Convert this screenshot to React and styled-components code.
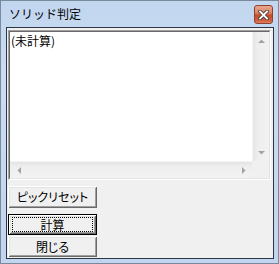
import React from 'react';
import styled, { createGlobalStyle } from 'styled-components';

const Global = createGlobalStyle`
  html, body { margin: 0; padding: 0; width: 279px; height: 264px; overflow: hidden; background: #fff; }
  #root { width: 279px; height: 264px; }
`;

const uiFont = `"Noto Sans CJK JP", "Noto Sans", sans-serif`;

const Window = styled.div`
  box-sizing: border-box;
  width: 279px;
  height: 264px;
  border: 1px solid #7a8a9c;
  background: linear-gradient(to bottom, #c2d6ef 0%, #c9dcf2 30%, #c1d5ee 100%);
  display: flex;
  flex-direction: column;
  padding: 0 4px 4px 5px;
  font-family: ${uiFont};
`;

const TitleBar = styled.div`
  height: 26px;
  flex: none;
  display: flex;
  align-items: center;
  justify-content: space-between;
  padding-left: 3px;
`;

const Title = styled.span`
  font-size: 12px;
  line-height: 14px;
  color: #000;
  margin-top: -1px;
`;

const CloseBtn = styled.div`
  box-sizing: border-box;
  width: 19px;
  height: 19px;
  margin: 4px 1px 0 0;
  align-self: flex-start;
  border: 1px solid #8e4330;
  border-radius: 3px;
  background: linear-gradient(to bottom, #e8a690 0%, #dc8466 40%, #c54a2c 55%, #d0603f 85%, #dc8060 100%);
  display: flex;
  align-items: center;
  justify-content: center;
`;

const Client = styled.div`
  flex: 1;
  border: 1px solid #2c3644;
  background: #f0f0f0;
  display: flex;
  flex-direction: column;
  align-items: flex-start;
  padding: 2px 1px 1px 1px;
`;

const TextOuter = styled.div`
  box-sizing: border-box;
  width: 263px;
  height: 150px;
  flex: none;
  border: 1px solid;
  border-color: #a0a0a0 #ffffff #ffffff #a0a0a0;
`;

const TextInner = styled.div`
  box-sizing: border-box;
  width: 100%;
  height: 100%;
  border: 1px solid;
  border-color: #696969 #e3e3e3 #e3e3e3 #696969;
  display: grid;
  grid-template-columns: 1fr 17px;
  grid-template-rows: 1fr 17px;
  background: #fff;
`;

const Content = styled.div`
  padding: 2px 1px;
  font-size: 12px;
  line-height: 14px;
  color: #000;
  font-family: ${uiFont};
`;

const VScroll = styled.div`
  display: flex;
  flex-direction: column;
  background: linear-gradient(to right, #e4e4e4, #eeeeee 30%, #f2f2f2);
  border-left: 1px solid #f4f4f4;
`;

const HScroll = styled.div`
  display: flex;
  background: linear-gradient(to bottom, #e4e4e4, #eeeeee 30%, #f2f2f2);
  border-top: 1px solid #f4f4f4;
`;

const Corner = styled.div`
  background: #f0f0f0;
`;

const ArrowBox = styled.div`
  width: ${p => (p.$v ? '100%' : '17px')};
  height: ${p => (p.$v ? '17px' : '100%')};
  flex: none;
  display: flex;
  align-items: center;
  justify-content: center;
`;

const Track = styled.div`
  flex: 1;
`;

const Button = styled.button`
  box-sizing: border-box;
  position: relative;
  width: 89px;
  height: ${p => p.$h}px;
  margin-top: ${p => p.$mt}px;
  flex: none;
  padding: 0;
  border: ${p => (p.$default ? '1px solid #000' : 'none')};
  background: #f0f0f0;
  font-family: ${uiFont};
  font-size: 12px;
  line-height: 14px;
  color: #000;
  font-feature-settings: "palt";
  box-shadow: inset 1px 1px #ffffff, inset -1px -1px #696969, inset 2px 2px #e3e3e3, inset -2px -2px #a0a0a0;
  cursor: default;
  outline: none;

  &::after {
    content: '';
    display: ${p => (p.$default ? 'block' : 'none')};
    position: absolute;
    left: 3px;
    right: 3px;
    top: 2px;
    bottom: 2px;
    border: 1px dotted #000;
  }
`;

const Tri = ({ dir }) => {
  const pts = {
    up: '0,4 7,4 3.5,0.5',
    down: '0,0 7,0 3.5,3.5',
    left: '4,0 4,7 0.5,3.5',
    right: '0,0 0,7 3.5,3.5',
  }[dir];
  const vertical = dir === 'up' || dir === 'down';
  return (
    <svg width={vertical ? 7 : 4} height={vertical ? 4 : 7} viewBox={vertical ? '0 0 7 4' : '0 0 4 7'}>
      <polygon points={pts} fill="#a3a3a3" />
    </svg>
  );
};

const CloseIcon = () => (
  <svg width="11" height="10" viewBox="0 0 11 10">
    <path d="M2 1.5 L9 8.5 M9 1.5 L2 8.5" stroke="#4a3a36" strokeWidth="3.6" strokeLinecap="square" />
    <path d="M2 1.5 L9 8.5 M9 1.5 L2 8.5" stroke="#ffffff" strokeWidth="1.8" strokeLinecap="square" />
  </svg>
);

export default function App() {
  return (
    <>
      <Global />
      <Window>
        <TitleBar>
          <Title>ソリッド判定</Title>
          <CloseBtn>
            <CloseIcon />
          </CloseBtn>
        </TitleBar>
        <Client>
          <TextOuter>
            <TextInner>
              <Content>(未計算)</Content>
              <VScroll>
                <ArrowBox $v><Tri dir="up" /></ArrowBox>
                <Track />
                <ArrowBox $v><Tri dir="down" /></ArrowBox>
              </VScroll>
              <HScroll>
                <ArrowBox><Tri dir="left" /></ArrowBox>
                <Track />
                <ArrowBox><Tri dir="right" /></ArrowBox>
              </HScroll>
              <Corner />
            </TextInner>
          </TextOuter>
          <Button $h={22} $mt={6}>ピックリセット</Button>
          <Button $h={21} $mt={6} $default>計算</Button>
          <Button $h={21} $mt={1}>閉じる</Button>
        </Client>
      </Window>
    </>
  );
}
